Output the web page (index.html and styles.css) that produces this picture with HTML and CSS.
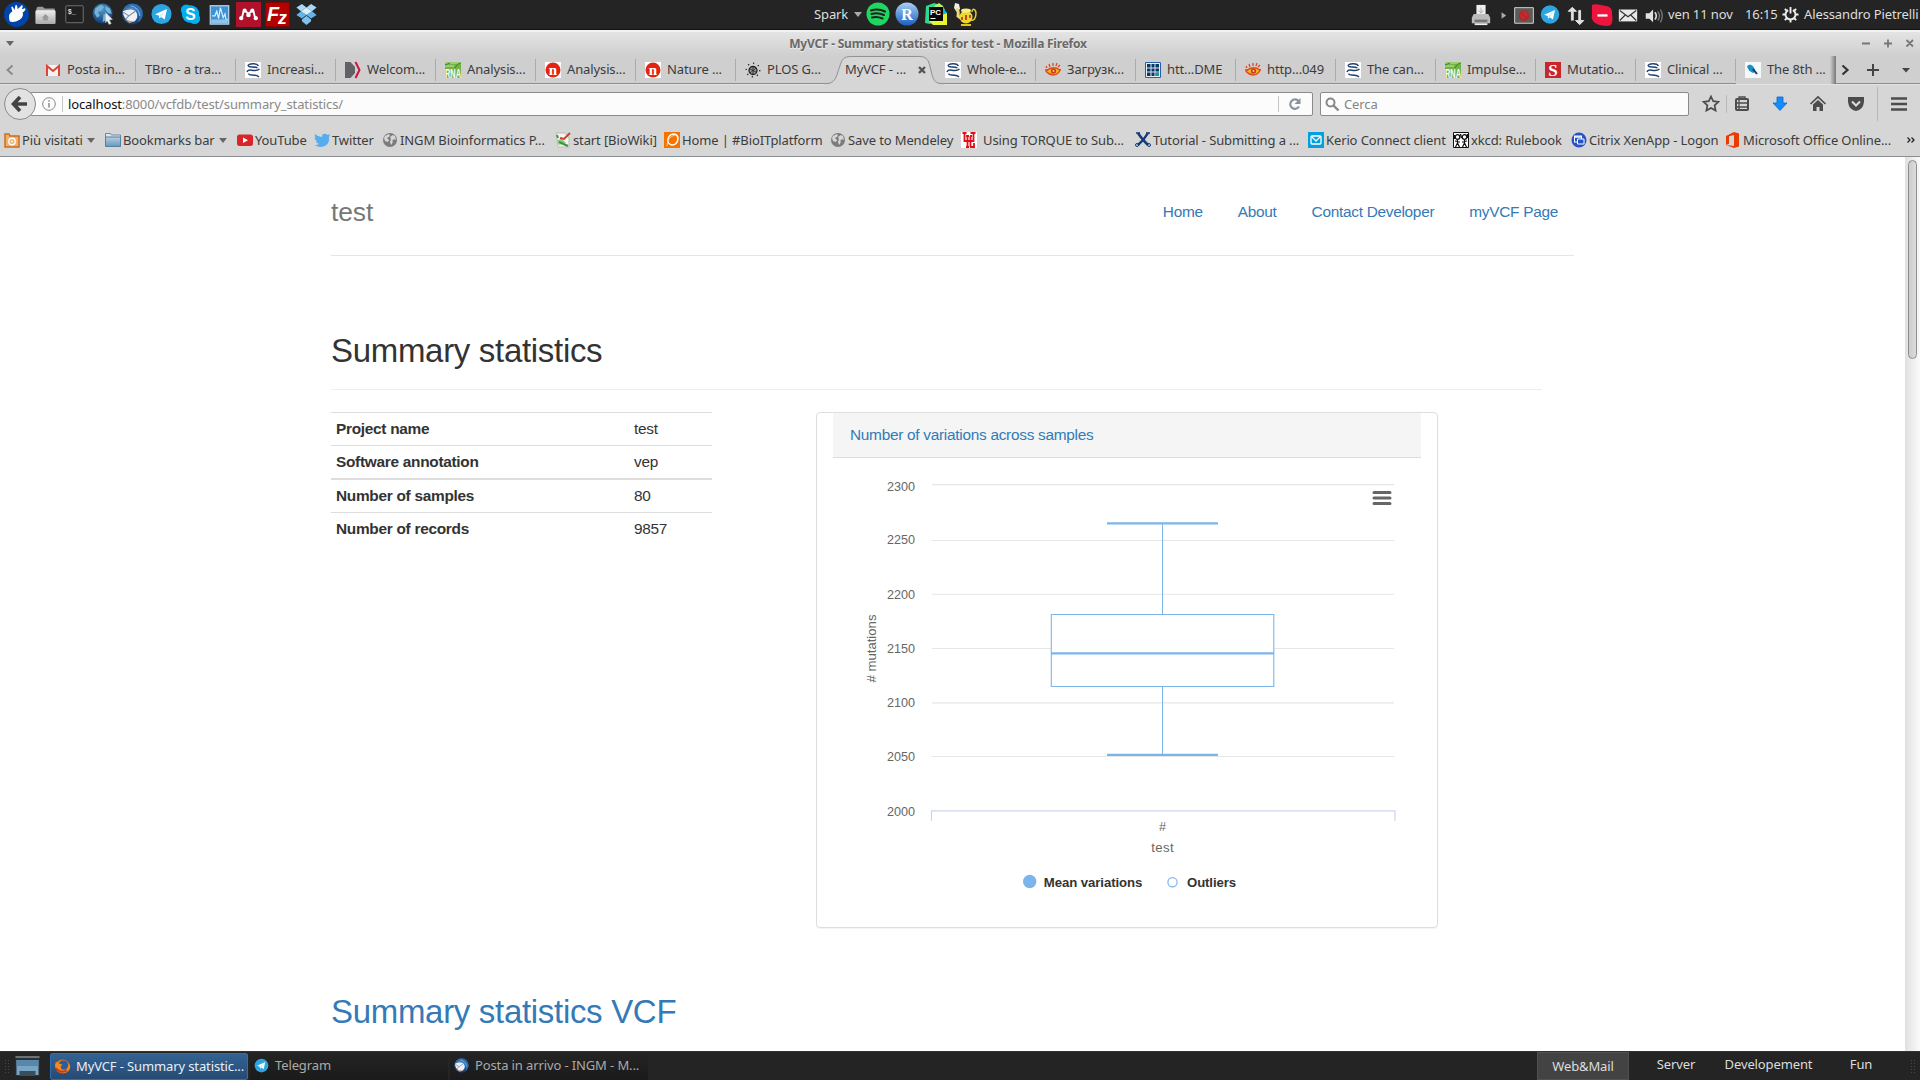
FILE: index.html
```html
<!DOCTYPE html>
<html lang="it">
<head>
<meta charset="utf-8">
<title>MyVCF - Summary statistics for test</title>
<link rel="stylesheet" href="styles.css">
</head>
<body>
<svg class="defs" width="0" height="0" aria-hidden="true">
  <defs>
    <linearGradient id="sky" x1="0" y1="0" x2="0" y2="1"><stop offset="0" stop-color="#a9d0f5"/><stop offset="1" stop-color="#1c5fc0"/></linearGradient>
    <radialGradient id="earth" cx=".45" cy=".3" r=".7"><stop offset="0" stop-color="#4f9ad0"/><stop offset="1" stop-color="#12396c"/></radialGradient>
    <linearGradient id="silver" x1="0" y1="0" x2="0" y2="1"><stop offset="0" stop-color="#eee"/><stop offset="1" stop-color="#aaa"/></linearGradient>
    <linearGradient id="folderBlue" x1="0" y1="0" x2="0" y2="1"><stop offset="0" stop-color="#b5d0e4"/><stop offset="1" stop-color="#6698bd"/></linearGradient>
  </defs>
  <symbol id="telegram" viewBox="0 0 24 24"><circle cx="12" cy="12" r="11" fill="#2ca5e0"/><path d="M5 12.2 18 6.5 15.5 18 11.6 15.2 9.6 17 9.3 13.8Z" fill="#fff"/><path d="m9.3 13.8 6.4-4.9-4.1 6.3" fill="#d4e8f5"/></symbol>
  <symbol id="thunderbird" viewBox="0 0 24 24"><circle cx="12" cy="12" r="11.500" fill="url(#earth)"/><path d="M3 6Q8-1 17 2q7 4 6 12-2 6-5 7 3-7 0-12Q12 2 3 6Z" fill="#2f6cb4"/><path d="M10 3q9 2 10 11" fill="none" stroke="#7fb4e4" stroke-width="1.300"/><path d="M1.500 9Q8 6 14 8q4 3 3 8-2 5-7 5Q2 18 1.500 9Z" fill="#eef0f4"/><path d="m2 10 6 4 7-5M8 14l-4 4" fill="none" stroke="#7c84a6" stroke-width="1.100"/><path d="M4 17q4 4 10 2l-5 3q-4-2-5-5" fill="#c09a82"/></symbol>
  <symbol id="wiley" viewBox="0 0 16 16"><path d="M0 0h16v16H0z" fill="#fff"/><path d="M13.500 3.800Q12 1.500 8 1.700 3 2 3.200 3.700 3.500 5 7 5q4 0 5.500 1M2 10q1-2.500 5-1.700 5 1 7.500-1.300M4 11.500Q3.500 13 7 13q5 0 7 2" fill="none" stroke="#24406e" stroke-width="1.500"/></symbol>
  <symbol id="eye" viewBox="0 0 16 16"><path d="M1 9q7-6 14-1-2 5-7 5-5-1-7-4Z" fill="#f5b51a" stroke="#dd4b27" stroke-width="1.400"/><circle cx="8.500" cy="9" r="2.600" fill="#c93b1e"/><circle cx="8.500" cy="9" r="1" fill="#ffd93a"/><path d="m2 6-1-2m4 1L4 2m4 2V1m3 3 1-3m1 4 2-2M0 8h3m11 0h2" stroke="#dd4b27" stroke-width="1.300"/></symbol>
  <symbol id="globe" viewBox="0 0 16 16"><circle cx="8" cy="8" r="7" fill="#7c7c7c"/><path d="M3 4 7 2l1 2-3 2 2 2-1 2-3-1-1-3Zm8-1 2 1 1 4-2-1-2 2 1 1-2 3-1-3 1-3-1-2Z" fill="#d7d7d7"/></symbol>
</svg>

<header class="panel">
  <div class="launchers">
    <svg viewBox="0 0 24 24"><circle cx="12" cy="12" r="12" fill="#0044aa"/><path d="M5 16Q4 11 8 9L7 5q1-2 3 3l1-5q2-1 2 4l4-4q2 0 0 4l3-1q2 1-2 4 1 4-3 7-5 3-8 2Q5 19 5 16" fill="#fff"/></svg>
    <svg viewBox="0 0 24 24"><path d="M2 7q0-3 2-3h5l2 2h11v16H2Z" fill="#999"/><rect x="1" y="8" width="22" height="15" rx="1.500" fill="url(#silver)"/><path d="m12 12-4 4h1.500v3h5v-3H16Z" fill="#999"/></svg>
    <svg viewBox="0 0 24 24"><rect x="2.500" y="3" width="19" height="18.500" rx="1" fill="#202020" stroke="#777"/><text x="4.500" y="11.500" class="mono" font-size="7.500" font-weight="bold" fill="#ddd">$_</text></svg>
    <svg viewBox="0 0 24 24"><circle cx="11" cy="11.500" r="11" fill="url(#earth)"/><path d="M3 6 9 2l4 2-3 4-4 2 2 4-3 2-3-5ZM14 3l5 3 2 6-4-1-3-4Zm-2 9 5 1-2 5-4 3Z" fill="#75b2d3"/><path d="m14 10 8 8-3.500.5 2 4-2.500 1-2-4-2 2Z" fill="#eee" stroke="#999" stroke-width=".5"/></svg>
    <svg viewBox="0 0 24 24"><use href="#thunderbird"/></svg>
    <svg viewBox="0 0 24 24"><use href="#telegram"/></svg>
    <svg viewBox="0 0 24 24"><circle cx="12" cy="12" r="9.500" fill="#00aff0"/><circle cx="7.500" cy="7.500" r="6" fill="#00aff0"/><circle cx="16.500" cy="17" r="6" fill="#00aff0"/><text x="12" y="18" text-anchor="middle" font-size="17" font-weight="bold" fill="#fff">S</text></svg>
    <svg viewBox="0 0 24 24"><rect x="2" y="3" width="20" height="20" fill="#3c92d5" stroke="#aacdea" stroke-width="1.500"/><path d="M4 14h3l2-5 2 8 2-12 3 11 2-4 1 6h2" fill="none" stroke="#e1f0fc" stroke-width="1.300"/><path d="M3 18h18v4H3z" fill="#8ec3ec"/></svg>
    <svg viewBox="0 0 24 24" class="full"><path d="M0 0h24v24H0z" fill="#b0122b"/><path d="M5 16q1-1 1.500-4Q7 8 8.500 8l3.500 3.500L15.500 8q1.500 0 2 4 .5 3 1.500 4" fill="none" stroke="#fff" stroke-width="1.800"/><circle cx="8.300" cy="8.300" r="2" fill="#fff"/><circle cx="15.700" cy="8.300" r="2" fill="#fff"/><circle cx="12" cy="12.500" r="2.200" fill="#fff"/><circle cx="5" cy="15.500" r="2" fill="#fff"/><circle cx="19" cy="15.500" r="2" fill="#fff"/></svg>
    <svg viewBox="0 0 24 24" class="full"><path d="M.5.5h23v23H.5z" fill="#b40000" stroke="#800" stroke-dasharray="1 1"/><text x="2" y="18" font-size="19" font-weight="bold" font-style="italic" fill="#fff">F</text><text x="12.500" y="21" font-size="17" font-weight="bold" font-style="italic" fill="#fff">z</text></svg>
    <svg viewBox="0 0 24 24"><path d="m7 1 5 4-6 4-5-4Zm10 0 6 4-5 4-6-4Z" fill="#a8d7f7"/><path d="m6 9 6 4-5 4-6-4Zm12 0 5 4-6 4-5-4Z" fill="#61b5ef"/><path d="m12 5 6 4-6 4-6-4Z" fill="#d8effc"/><path d="m7 18 5-4 5 4v2l-5 4-5-4Z" fill="#7fc1ef"/></svg>
  </div>
  <div class="player"><span>Spark</span><i class="caret"></i></div>
  <div class="launchers mid">
    <svg viewBox="0 0 24 24"><circle cx="12" cy="12" r="11.500" fill="#1ed760"/><path d="M5 8.500q7-2.500 14 1M5.500 12q6-2 12.500 1M6 15.500q5-1.500 10.500 1" fill="none" stroke="#202020" stroke-width="2" stroke-linecap="round"/></svg>
    <svg viewBox="0 0 24 24"><circle cx="12" cy="12" r="11.500" fill="url(#sky)"/><text x="12" y="17.500" text-anchor="middle" class="serif" font-size="16" font-weight="bold" fill="#fff">R</text></svg>
    <svg viewBox="0 0 24 24"><path d="m2 4 8-3 9 3 2 4-3 8-12 6-5-1Z" fill="#30d88d"/><path d="m15 1 4 3-1 5-8-5Z" fill="#b9ed6a"/><path d="m19 6 4 5-4 4Z" fill="#0bb7ee"/><path d="m18 13 5-2v12H9l-4-4Z" fill="#e9f32f"/><path d="M5 5h14v14H5z" fill="#080808"/><text x="6" y="12.500" font-size="8" font-weight="bold" textLength="11" fill="#fff">PC</text><path d="M6.500 16.500h5" stroke="#fff"/></svg>
    <svg viewBox="0 0 24 24"><path d="m1 6 1-5 4 1 1 5-3 3Z" fill="#eee"/><path d="M3 7q3 1 2 7l4 3" fill="none" stroke="#f2d67a" stroke-width="3"/><path d="M19 10q0-4 3-2 2 3 0 8-1 3-4 2" fill="none" stroke="#e4cc28" stroke-width="1.500"/><ellipse cx="13" cy="15" rx="6.500" ry="6.500" fill="#edd832"/><ellipse cx="13" cy="8.500" rx="5" ry="2" fill="#f7ee80"/><path d="M8 22h10v2H8z" fill="#e3c21f"/><path d="M12 13h2v5h-2zm-4 2h2v3H8zm8-2h2v3h-2z" fill="#c44a26"/></svg>
  </div>
  <div class="tray">
    <svg viewBox="0 0 24 24"><path d="M7 1h10v10H7z" fill="#eee"/><path d="M12 4v5m-2.500-2 2.500 3 2.500-3" stroke="#aaa" fill="none"/><path d="M4 11h16l2 4v6H2v-6Z" fill="#bbb"/><path d="M5 17h14v3H5z" fill="#777"/><path d="M5 21h14v2H5z" fill="#eee"/></svg>
    <svg class="tri" viewBox="0 0 17 24"><path d="M7.500 9v7l5-3.500Z" fill="#aaa"/></svg>
    <svg viewBox="0 0 24 24"><path d="M1.800 4h20.400v17H1.800z" fill="#5b5b5b" stroke="#ddd"/><circle cx="12" cy="12.500" r="4.800" fill="#a83a3a" stroke="#c81f1f" stroke-width="2"/><path d="m8.500 9 7 7" stroke="#c81f1f" stroke-width="2"/></svg>
    <svg viewBox="0 0 24 24"><use href="#telegram" x="1" y=".5" width="22" height="22"/></svg>
    <svg viewBox="0 0 24 24"><path d="M7 18V8H3.500L8 3.500 12.500 8H9v10M15 7v11h-3.500l4.500 4.500 4.500-4.500H17V7Z" fill="#e2e2e2" stroke="#e2e2e2"/></svg>
    <svg viewBox="0 0 24 24"><path d="M1 1q5-2 14 1 9 1 8 9 2 13-5 13-8 0-13-3-5-3-4-9Z" fill="#ed143d"/><path d="M7 12.500h11" stroke="#fff" stroke-width="2.500"/></svg>
    <svg viewBox="0 0 24 24"><path d="M2 6h20v13H2z" fill="#e8e8e8"/><path d="m3 7 9 7 9-7M3 18l6-6m12 6-6-6" stroke="#333" fill="none" stroke-width="1.300"/></svg>
    <svg viewBox="0 0 24 24"><path d="M3 10h4l4-4v14l-4-4H3Z" fill="#e2e2e2"/><path d="M13 9q3 4 0 8" fill="none" stroke="#ddd" stroke-width="1.800"/><path d="M16 8q4 5 0 10m3-12q4 7 0 14" fill="none" stroke="#777" stroke-width="1.500"/></svg>
    <span class="date">ven 11 nov</span>
    <span class="clock">16:15</span>
    <svg class="gear" viewBox="0 0 18 18"><path d="M6.500 4.300a5.300 5.300 0 1 0 5 0" fill="none" stroke="#eee" stroke-width="2"/><path d="M9 1v7M.5 9h3m11 0h3M9 14.500v3M3 3l2 2m10-2-2 2M3 15l2-2m10 2-2-2" stroke="#eee" stroke-width="2"/></svg>
    <span class="user">Alessandro Pietrelli</span>
  </div>
</header>

<div class="titlebar">
  <i class="caret"></i>
  <span class="title">MyVCF - Summary statistics for test - Mozilla Firefox</span>
  <svg class="winbtns" viewBox="0 0 60 12"><path d="M2 6.500h8M24 6.500h8M28 2.500v8M46.500 3l6.500 6.500m0-6.500-6.500 6.500" stroke="#777" stroke-width="1.800" fill="none"/></svg>
</div>

<nav class="tabs">
  <svg class="scroll-left" viewBox="0 0 36 22"><path d="m12.500 6.500-5 4.500 5 4.500" fill="none" stroke="#888" stroke-width="1.800"/></svg>
  <div class="tab"><svg viewBox="0 0 16 16"><path d="M1 3h14v11H1z" fill="#f2f2f2"/><path d="M2 14V4l6 5 6-5v10" fill="none" stroke="#db4437" stroke-width="2"/></svg><span>Posta in...</span></div>
  <div class="tab"><span>TBro - a tra...</span></div>
  <div class="tab"><svg><use href="#wiley"/></svg><span>Increasi...</span></div>
  <div class="tab"><svg viewBox="0 0 16 16"><path d="M0 0h5.500L10 5v6l-4.500 5H0z" fill="#606266"/><path d="m10.500 0 4 8-4 8" fill="none" stroke="#cf1241" stroke-width="2"/></svg><span>Welcom...</span></div>
  <div class="tab"><svg viewBox="0 0 16 16"><path d="M0 0h16v16H0z" fill="#74b447"/><path d="M0 1h16M0 4h9" stroke="#c1e4a0"/><path d="M10 6Q12 1 16 1M0 3 5 1" stroke="#2b8a2e" fill="none"/><text x="0" y="15.500" font-size="12.500" font-weight="bold" textLength="16" lengthAdjust="spacingAndGlyphs" fill="#fff">RNA</text></svg><span>Analysis...</span></div>
  <div class="tab"><svg viewBox="0 0 16 16"><path d="M0 0h16v16H0z" fill="#fff"/><circle cx="8" cy="8" r="7.500" fill="#e42313"/><text x="8" y="12.500" text-anchor="middle" class="serif" font-size="15" font-weight="bold" fill="#fff">n</text></svg><span>Analysis...</span></div>
  <div class="tab"><svg viewBox="0 0 16 16"><path d="M0 0h16v16H0z" fill="#fff"/><circle cx="8" cy="8" r="7.500" fill="#e42313"/><text x="8" y="12.500" text-anchor="middle" class="serif" font-size="15" font-weight="bold" fill="#fff">n</text></svg><span>Nature ...</span></div>
  <div class="tab before"><svg viewBox="0 0 16 16"><circle cx="8" cy="8.500" r="4" fill="#999" stroke="#222" stroke-width="1.300"/><path d="M8 5v8m-3-6 6 3m0-4-6 5" stroke="#222" stroke-width=".8"/><circle cx="8" cy="8" r="6.800" fill="none" stroke="#222" stroke-width="1.300" stroke-dasharray="1.300 4"/></svg><span>PLOS G...</span></div>
  <div class="tab active"><svg class="shape" viewBox="0 0 124 30"><path d="M0 28.500h3q7 0 10-8l4-12Q19 .5 27 .5h72q8 0 10 8l3 12q2 8 9 8h3V30H0Z" fill="#d6d6d6"/><path d="M0 28.500h3q7 0 10-8l4-12Q19 .5 27 .5h72q8 0 10 8l3 12q2 8 9 8h3" fill="none" stroke="#8b8e93"/></svg><span>MyVCF - ...</span><svg class="close" viewBox="0 0 8 8"><path d="m1 1 6 6m0-6L1 7" stroke="#555" stroke-width="2.400"/></svg></div>
  <div class="tab"><svg><use href="#wiley"/></svg><span>Whole-e...</span></div>
  <div class="tab"><svg><use href="#eye"/></svg><span>Загрузк...</span></div>
  <div class="tab"><svg viewBox="0 0 16 16"><path d="M.5.5h15v15H.5z" fill="#e8eef5" stroke="#2a5caa"/><path d="M2 2h12v12H2z" fill="#073763"/><path d="M2 6h12M2 10h12M6 2v12m4-12v12" stroke="#dce6f2"/><path d="M11 11h3v3h-3z" fill="#00a98a"/></svg><span>htt...DME</span></div>
  <div class="tab"><svg><use href="#eye"/></svg><span>http...049</span></div>
  <div class="tab"><svg><use href="#wiley"/></svg><span>The can...</span></div>
  <div class="tab"><svg viewBox="0 0 16 16"><path d="M0 0h16v16H0z" fill="#74b447"/><path d="M0 1h16M0 4h9" stroke="#c1e4a0"/><path d="M10 6Q12 1 16 1M0 3 5 1" stroke="#2b8a2e" fill="none"/><text x="0" y="15.500" font-size="12.500" font-weight="bold" textLength="16" lengthAdjust="spacingAndGlyphs" fill="#fff">RNA</text></svg><span>Impulse...</span></div>
  <div class="tab"><svg viewBox="0 0 16 16"><path d="M0 0h16v16H0z" fill="#c9252c"/><text x="8" y="14" text-anchor="middle" class="serif" font-size="17" font-weight="bold" fill="#fff">S</text></svg><span>Mutatio...</span></div>
  <div class="tab"><svg><use href="#wiley"/></svg><span>Clinical ...</span></div>
  <div class="tab last"><svg viewBox="0 0 16 16"><path d="M0 0h16v16H0z" fill="#f4f8fa"/><path d="m2 4 3-1.500q5 1.500 5 7.500l-2 1Q3 9 2 4Z" fill="#1591c5"/><path d="m8 7 4 5" stroke="#173b5a" stroke-width="2"/></svg><span>The 8th ...</span></div>
  <svg class="tab-tools" viewBox="0 0 84 28"><path d="m6.500 9.500 5 4.500-5 4.500" fill="none" stroke="#333" stroke-width="2.200"/><path d="M31 14h12M37 8v12" stroke="#444" stroke-width="2"/><path d="M66 12h8l-4 4.500Z" fill="#444"/></svg>
</nav>

<div class="navbar">
  <svg class="back" viewBox="0 0 32 32"><circle cx="16" cy="16" r="15.500" fill="#e2e2e2" stroke="#8b8b8b"/><path d="m16 9-6.500 7 6.500 7M10 16h13" fill="none" stroke="#444" stroke-width="3.600"/></svg>
  <div class="urlbar">
    <svg class="info" viewBox="0 0 14 14"><circle cx="7" cy="7" r="6.300" fill="none" stroke="#888"/><path d="M7 6v4.500M7 3.200v1.500" stroke="#888" stroke-width="1.500"/></svg>
    <i class="bar"></i>
    <span class="url"><b>localhost</b>:8000/vcfdb/test/summary_statistics/</span>
    <i class="bar"></i>
    <svg class="reload" viewBox="0 0 14 14"><path d="M11 9.500A4.700 4.700 0 1 1 10.500 4" fill="none" stroke="#8594a0" stroke-width="2.200"/><path d="M12.500 1v6h-6Z" fill="#8594a0"/></svg>
  </div>
  <div class="search"><svg viewBox="0 0 14 14"><circle cx="5.500" cy="5.500" r="4" fill="none" stroke="#888" stroke-width="2"/><path d="m8.500 8.500 5 5" stroke="#888" stroke-width="2.400"/></svg><span>Cerca</span></div>
  <svg class="nav-tools" viewBox="0 0 231 34"><g fill="none" stroke="#4c4c4c" stroke-width="2"><path d="m22 9.500 2.200 4.700 5.200.6-3.800 3.600 1 5.100-4.600-2.600-4.600 2.600 1-5.100-3.800-3.600 5.200-.6Z" stroke-width="1.700"/><rect x="47" y="12" width="12" height="11" rx="1"/><path d="M47 16h12m-12 4h12m-9-8v11m0-12v-1h6v1" stroke-width="1.300"/></g><path d="M37.500 8v18M188.500 0v34" stroke="#b9b9b9"/><path d="M88 10h6v6h4l-7 7.500-7-7.500h4Z" fill="#148cff" stroke="#0768ca" stroke-width=".8"/><path d="m121.500 17 7.500-7 7.500 7" fill="none" stroke="#4c4c4c" stroke-width="1.700"/><path d="M124 17.500 129 13l5 4.500V24h-3.500v-4h-3v4H124Z" fill="#4c4c4c"/><path d="M159 10h16v5q-1 8-8 9-7-1-8-9Z" fill="#4c4c4c"/><path d="m163 14.500 4 4 4-4" fill="none" stroke="#ddd" stroke-width="2"/><path d="M202 11.500h16M202 17h16M202 22.500h16" stroke="#4c4c4c" stroke-width="2.600"/></svg>
</div>

<div class="bookmarks">
  <div class="bm"><svg viewBox="0 0 16 16"><path d="M1 15V2h4l1 2h9v11Z" fill="#eeb06c" stroke="#cf6c1c" stroke-width="1.500"/><circle cx="8" cy="9.500" r="3.200" fill="none" stroke="#fff" stroke-width="1.400"/><circle cx="8" cy="9.500" r="1" fill="#fff"/></svg><span>Più visitati</span><i class="caret"></i></div>
  <div class="bm"><svg viewBox="0 0 16 16"><path d="M.5 14V1.500h5l1 1.500h9v11Z" fill="#dce6ed" stroke="#70889c"/><path d="M.5 5h15v9.500H.5z" fill="url(#folderBlue)" stroke="#55809f"/></svg><span>Bookmarks bar</span><i class="caret"></i></div>
  <div class="bm"><svg viewBox="0 0 16 16"><rect y="2.500" width="16" height="11.500" rx="2.500" fill="#d9252a"/><path d="m6 5.500 5 2.700-5 2.800Z" fill="#fff"/></svg><span>YouTube</span></div>
  <div class="bm"><svg viewBox="0 0 16 16"><path d="M1 2q3 3 7 3 0-4 4-3l2 1 2-1-1 3q1 9-8 10-4 0-6-2 3 0 4-1-3-1-3-3h1Q0 7 1 5l1 1Q0 4 1 2" fill="#55acee"/></svg><span>Twitter</span></div>
  <div class="bm"><svg><use href="#globe"/></svg><span>INGM Bioinformatics P...</span></div>
  <div class="bm"><svg viewBox="0 0 16 16"><path d="M1 1h9l4 5v9H3Z" fill="#f6f3e8" stroke="#bbb"/><path d="m2 8 5-1 4 4-7 2Z" fill="#8cc98d"/><path d="m5 6 4 1 6-6" fill="none" stroke="#cb4328" stroke-width="2"/><path d="m2 3 1 3m1 4 9 4" stroke="#3a963b" stroke-width="2"/></svg><span>start [BioWiki]</span></div>
  <div class="bm"><svg viewBox="0 0 16 16"><path d="M0 0h16v16H0z" fill="#f57400"/><path d="M9 2q5 0 5 5-1 6-6 6Q3 12 4 7q1-4 5-5" fill="none" stroke="#fff" stroke-width="1.500"/><path d="M3 14Q3 5 11 3" fill="none" stroke="#ffd2a0"/></svg><span>Home | #BioITplatform</span></div>
  <div class="bm"><svg><use href="#globe"/></svg><span>Save to Mendeley</span></div>
  <div class="bm"><svg viewBox="0 0 16 16"><path d="M0 0h16v16H0z" fill="#fff"/><path d="M1.500 1h4m4 0h5M3.500 1v8h9V1M6.500 4v11m3-11v11M5 4h3m1 0h2M5 15h3m1 0h5m-1 0v-4" fill="none" stroke="#e3101c" stroke-width="1.800"/></svg><span class="gap">Using TORQUE to Sub...</span></div>
  <div class="bm"><svg viewBox="0 0 16 16"><path d="M3 1q3 5 10 12M13 1Q9 8 3 13" fill="none" stroke="#173b78" stroke-width="2.500"/><circle cx="2" cy="13" r="1.500" fill="none" stroke="#173b78"/><circle cx="14" cy="13" r="1.500" fill="none" stroke="#173b78"/><path d="M1 1h4m6 0h4" stroke="#173b78" stroke-width="1.500"/></svg><span>Tutorial - Submitting a ...</span></div>
  <div class="bm"><svg viewBox="0 0 16 16"><path d="M0 0h16v16H0z" fill="#00a0df"/><rect x="3" y="4" width="10" height="8" rx="1" fill="none" stroke="#fff" stroke-width="1.300"/><path d="m4 5 4 4 4-4" fill="none" stroke="#fff" stroke-width="1.300"/></svg><span>Kerio Connect client</span></div>
  <div class="bm"><svg viewBox="0 0 16 16"><path d="M.5.5h15v15H.5z" fill="#fff" stroke="#111"/><path d="M1.500 3v4m6-5 1 4m6-4v4" stroke="#111" stroke-width="1.300"/><circle cx="4.500" cy="5" r="2.300" fill="#fff" stroke="#111" stroke-width="1.300"/><circle cx="11.500" cy="5" r="2.300" fill="#fff" stroke="#111" stroke-width="1.300"/><path d="M4.500 8v3l-2 4m2-4 2 4M2 9l5 1m4.500-2v3l-2 4m2-4 2 4M9 10l5-1" stroke="#111" fill="none" stroke-width="1.200"/></svg><span>xkcd: Rulebook</span></div>
  <div class="bm"><svg viewBox="0 0 16 16"><circle cx="8" cy="8" r="7.500" fill="#2552c5"/><rect x="3.500" y="4" width="7" height="6" fill="none" stroke="#fff"/><path d="M3 5h8" stroke="#fff" stroke-width="1.500"/><path d="M6.500 7h6.500v5H6.500z" fill="#2552c5" stroke="#fff"/></svg><span>Citrix XenApp - Logon</span></div>
  <div class="bm"><svg viewBox="0 0 16 16"><path d="m1 4 8-4 5 1.500v13L9 16 1 13l8 1V3L4 4.300v7.500L1 13Z" fill="#eb3c00"/></svg><span>Microsoft Office Online...</span></div>
  <svg class="more" viewBox="0 0 8 6"><path d="m.5.5 2.500 2.500L.5 5.500m4-5L7 3 4.500 5.500" fill="none" stroke="#222" stroke-width="1.300"/></svg>
</div>

<div class="viewport">
  <main class="page">
    <div class="masthead">
      <h3>test</h3>
      <ul class="links"><li><a>Home</a></li><li><a>About</a></li><li><a>Contact Developer</a></li><li><a>myVCF Page</a></li></ul>
    </div>
    <h2 class="heading">Summary statistics</h2>
    <div class="columns">
      <table class="facts">
        <tr><th>Project name</th><td>test</td></tr>
        <tr><th>Software annotation</th><td>vep</td></tr>
        <tr class="thick"><th>Number of samples</th><td>80</td></tr>
        <tr><th>Number of records</th><td>9857</td></tr>
      </table>
      <section class="card">
        <div class="card-title">Number of variations across samples</div>
        <svg class="chart" viewBox="833 458 588 468">
          <g stroke="#e6e6e6" stroke-width="1.100"><path d="M932 484.600h462M932 540.500h462M932 594.200h462M932 648.500h462M932 702.900h462M932 756.500h462"/></g>
          <path d="M931.500 821v-10.200h463.500V821" fill="none" stroke="#ccd6eb" stroke-width="1.200"/>
          <g font-size="12.600" fill="#666" text-anchor="end"><text x="915" y="491" textLength="28">2300</text><text x="915" y="544" textLength="28">2250</text><text x="915" y="599" textLength="28">2200</text><text x="915" y="653" textLength="28">2150</text><text x="915" y="707" textLength="28">2100</text><text x="915" y="761" textLength="28">2050</text><text x="915" y="816" textLength="28">2000</text></g>
          <g fill="#666" font-size="13.200" text-anchor="middle"><text x="1162.500" y="831" font-size="12.600">#</text><text x="1162.500" y="852" textLength="22.500">test</text><text transform="translate(876 648.500) rotate(-90)" textLength="68">&#35; mutations</text></g>
          <g fill="none" stroke="#7cb5ec"><path d="M1162.500 523.500v91m0 72v68" stroke-width="1"/><path d="M1051.300 614.500h222.500v72h-222.500z" fill="#fff" stroke-width="1.100"/><path d="M1051 653.400h223M1107 523.400h111M1107 754.800h111" stroke-width="2.200"/></g>
          <path d="M1374 492.500h16M1374 498h16M1374 503.500h16" stroke="#666" stroke-width="3" stroke-linecap="round"/>
          <circle cx="1029.700" cy="881.500" r="6.700" fill="#7cb5ec"/>
          <circle cx="1172.500" cy="882.300" r="4.600" fill="#fff" stroke="#7cb5ec" stroke-width="1.200"/>
          <g font-size="13.200" font-weight="bold" fill="#333"><text x="1043.800" y="887" textLength="98.500">Mean variations</text><text x="1187" y="887" textLength="49">Outliers</text></g>
        </svg>
      </section>
    </div>
    <h2 class="heading next">Summary statistics VCF</h2>
  </main>
  <div class="scrollbar"><i></i></div>
</div>

<footer class="taskbar">
  <i class="grip"></i>
  <svg class="desk" viewBox="0 0 24 20"><path d="M0 0h24v20H0z" fill="#26323b"/><path d="M0 1h24" stroke="#888" stroke-width="1.500"/><path d="M1 4h22v15H1z" fill="#78a5c4"/><path d="M1 4h22v6H1z" fill="#5a87a8"/><path d="M4 15h16v5H4z" fill="#384e5d"/></svg>
  <div class="task on"><svg viewBox="0 0 16 16"><circle cx="8" cy="8" r="7.500" fill="#e3731b"/><circle cx="9" cy="6.500" r="5" fill="#2b5ba2"/><path d="M1 3 5 5l3 1-2 2 1 3q4 2 6-1 3-4 0-8 4 4 3 8-2 5-8 5-7-1-8-8Z" fill="#f18b20"/><path d="M1 10q5 6 12 2" fill="none" stroke="#c53d13" stroke-width="2"/></svg><span>MyVCF - Summary statistic...</span></div>
  <div class="task"><svg viewBox="0 0 24 24"><use href="#telegram"/></svg><span>Telegram</span></div>
  <div class="task"><svg viewBox="0 0 24 24"><use href="#thunderbird"/></svg><span>Posta in arrivo - INGM - M...</span></div>
  <div class="spaces"><span class="current">Web&amp;Mail</span><span>Server</span><span>Developement</span><span>Fun</span></div>
  <i class="grip"></i>
</footer>
</body>
</html>
```
FILE: styles.css
```css
* { box-sizing: border-box; }
html, body { margin: 0; height: 1080px; overflow: hidden; }
body {
  width: 1920px;
  display: flex;
  flex-direction: column;
  background: #fff;
  font-family: "Noto Sans", sans-serif;
  font-size: 13px;
  letter-spacing: -.12px;
  color: #3c3c3c;
  white-space: nowrap;
}
svg { display: block; flex: none; overflow: visible; font-family: "Liberation Sans", Arial, sans-serif; letter-spacing: 0; }
.defs { position: absolute; }
.serif { font-family: "Liberation Serif", serif; }
.mono { font-family: "Liberation Mono", monospace; }
i { flex: none; font-style: normal; }
.caret { width: 0; height: 0; border: 4px solid transparent; border-top: 5px solid #666; border-bottom: 0; }

/* desktop panel */
.panel { flex: none; height: 30px; display: flex; background: #242424; color: #dedede; line-height: 29px; border-bottom: 1px solid #111; }
.launchers { flex: none; display: flex; padding-left: 1.500px; width: 814px; height: 28px; align-items: center; }
.launchers svg { width: 23px; height: 22px; margin: 0 3.050px; }
.launchers svg:first-child, .launchers .full { width: 25px; height: 25px; margin: 0 2.050px; }
.player { flex: none; display: flex; align-items: center; width: 48px; justify-content: space-between; }
.player .caret { border-top-color: #aaa; }
.launchers.mid { width: 606px; padding-left: 1px; }
.launchers.mid svg { width: 24px; height: 24px; margin: 0 2.600px; }
.tray { display: flex; align-items: center; height: 29px; flex: 1; }
.tray svg { width: 22px; height: 22px; margin: 0 2px; }
.tray .tri { width: 17px; margin: 0; }
.tray .date { margin-left: 1px; width: 77px; }
.tray .clock { width: 37px; }
.tray .gear { width: 17px; height: 17px; margin: 0 5px 0 0; }

/* window title */
.titlebar { flex: none; height: 26px; display: flex; align-items: center; background: linear-gradient(#e4e4e4, #cfcfcf); border-top: 2px solid #f3f3f3; padding: 0 0 2px 6px; }
.title { flex: 1; text-align: center; font-weight: bold; font-size: 12px; letter-spacing: -.22px; color: #696969; text-shadow: 0 1px #eee; padding-left: 2px; }
.winbtns { width: 60px; height: 12px; }

/* tab strip */
.tabs { flex: none; height: 28px; display: flex; align-items: center; background: #cfcfcf; border-bottom: 1px solid #8b8e93; }
.scroll-left { width: 36px; height: 22px; }
.tab { position: relative; width: 100px; height: 22px; display: flex; align-items: center; gap: 6px; padding-left: 9px; border-right: 1px solid #aaa; }
.tab svg { width: 16px; height: 16px; }
.tab span { padding-bottom: 2px; }
.tab.before, .tab.active { border-right: 0; }
.tab .shape { position: absolute; left: -14px; top: -3px; width: 124px; height: 29px; }
.tab.active span { position: relative; flex: 1; }
.tab .close { position: relative; width: 8px; height: 8px; margin-right: 10px; }
.tab.last { border-right: 0; height: 28px; background: linear-gradient(to left, #777, #cfcfcf 6px); }
.tab-tools { width: 84px; height: 28px; }

/* address row */
.navbar { flex: none; height: 40px; display: flex; align-items: center; background: #d6d6d6; border-top: 1px solid #e2e2e2; padding: 0 0 1px 4px; }
.back { width: 32px; height: 32px; position: relative; z-index: 1; }
.urlbar, .search { flex: none; height: 24px; display: flex; align-items: center; background: #fcfcfc; border: 1px solid #8b8b8b; border-radius: 2px; }
.urlbar { width: 1283px; margin-left: -6px; padding: 0 10px 0 11px; color: #8a8a8a; }
.urlbar b { font-weight: normal; color: #111; }
.info { width: 14px; height: 14px; margin-right: 6px; }
.bar { width: 1px; height: 16px; background: #c4c4c4; }
.url { flex: 1; padding: 0 0 1px 5px; }
.reload { width: 14px; height: 14px; margin-left: 9px; }
.search { width: 369px; margin-left: 7px; padding-left: 4px; gap: 5px; color: #858585; }
.search span { padding-bottom: 1px; }
.search svg { width: 14px; height: 14px; }
.nav-tools { width: 231px; height: 34px; }

/* bookmarks */
.bookmarks { flex: none; height: 33px; display: flex; align-items: center; background: #d6d6d6; border-bottom: 1px solid #8b8e93; padding-left: 4px; }
.bm { flex: none; display: flex; align-items: center; gap: 2px; width: 101px; }
.bm svg { width: 16px; height: 16px; }
.bm .caret { margin-left: 2px; }
.bm .gap { margin-left: 4px; }
.bm:nth-child(2) { width: 132px; }
.bm:nth-child(3) { width: 77px; }
.bm:nth-child(4) { width: 68px; }
.bm:nth-child(5) { width: 173px; }
.bm:nth-child(6) { width: 109px; }
.bm:nth-child(7) { width: 166px; }
.bm:nth-child(8) { width: 131px; }
.bm:nth-child(9) { width: 174px; }
.bm:nth-child(10) { width: 173px; }
.bm:nth-child(11) { width: 145px; }
.bm:nth-child(12) { width: 118px; }
.bm:nth-child(13) { width: 154px; }
.bm:nth-child(14) { width: 182px; }
.more { width: 8px; height: 6px; }

/* web page */
.viewport { flex: 1; min-height: 0; display: flex; overflow: hidden; font-family: "Liberation Sans", Arial, sans-serif; font-size: 15.400px; letter-spacing: -.28px; color: #333; }
.page { flex: 1; padding-left: 331px; }
.masthead { width: 1243px; height: 99px; display: flex; justify-content: space-between; align-items: center; border-bottom: 1px solid #e5e5e5; padding-top: 12px; }
h2, h3 { margin: 0; font-weight: normal; }
h3 { font-size: 26.400px; letter-spacing: -.1px; color: #777; }
.links { display: flex; gap: 35px; list-style: none; margin: 0; padding: 0 16px 0 0; color: #337ab7; }
.heading { width: 1211px; height: 134px; padding-top: 75px; line-height: 40px; font-size: 33px; letter-spacing: -.31px; border-bottom: 1px solid #eee; }
.heading.next { color: #337ab7; border: 0; padding-top: 64px; }
.columns { display: flex; margin-top: 22px; height: 516px; align-items: flex-start; }
.facts { width: 381px; border-collapse: collapse; }
.facts th, .facts td { height: 33px; padding: 0 5px; border-top: 1px solid #ddd; text-align: left; line-height: 22px; }
.facts th { width: 298px; }
.facts .thick th, .facts .thick td { border-top-width: 2px; height: 34px; }
.card { width: 622px; height: 516px; margin-left: 104px; padding: 0 16px; border: 1px solid #ddd; border-radius: 4px; box-shadow: 0 1px 1px #0000000d; }
.card-title { height: 45px; padding-left: 17px; line-height: 44px; background: #f5f5f5; border-bottom: 1px solid #ddd; border-radius: 3px 3px 0 0; color: #337ab7; }
.chart { width: 588px; height: 468px; }
.scrollbar { width: 15px; padding: 3px; background: linear-gradient(to right, #e0e0e0, #fafafa); }
.scrollbar i { display: block; width: 9px; height: 199px; border: 1px solid #8e8e8e; border-radius: 5px; background: linear-gradient(to right, #ccc, #dcdcdc); }

/* bottom panel */
.taskbar { flex: none; height: 29px; display: flex; align-items: center; background: #242424; border-top: 1px solid #333; padding: 0 4px; color: #aaa; }
.grip { width: 6px; height: 14px; background: radial-gradient(circle, #484848 .8px, transparent 1px) 0 0 / 3px 3px; }
.desk { width: 25px; height: 20px; margin: 0 10px 0 5px; }
.task { width: 198px; height: 27px; margin-right: 2px; display: flex; align-items: center; gap: 6px; padding: 0 0 2px 4px; background: linear-gradient(#242424, #1a1a1a); }
.task svg { width: 15px; height: 15px; }
.task.on { padding-bottom: 0; color: #e8eef5; background: linear-gradient(#336291, #2c5684 55%, #264a71); border: 1px solid #2f6dac; border-radius: 2px; }
.spaces { display: flex; margin-left: auto; margin-right: 2px; line-height: 25px; color: #ddd; }
.spaces span { width: 92px; text-align: center; }
.spaces .current { background: #434343; border: 1px solid #505050; line-height: 26px; }
.spaces span:nth-child(2) { width: 94px; }
.spaces span:nth-child(3) { width: 91px; }
.spaces span:nth-child(4) { width: 94px; }
```
